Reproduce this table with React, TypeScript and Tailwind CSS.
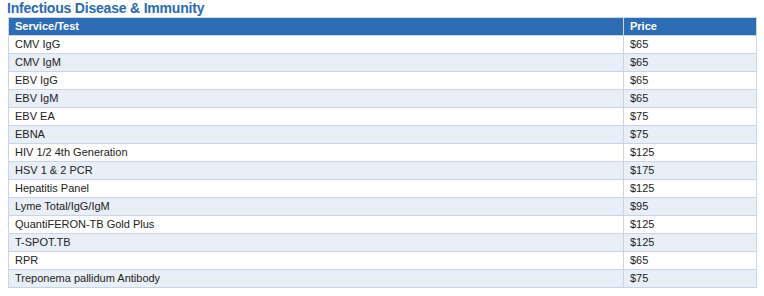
const rows: [string, string][] = [
  ["CMV IgG", "$65"],
  ["CMV IgM", "$65"],
  ["EBV IgG", "$65"],
  ["EBV IgM", "$65"],
  ["EBV EA", "$75"],
  ["EBNA", "$75"],
  ["HIV 1/2 4th Generation", "$125"],
  ["HSV 1 & 2 PCR", "$175"],
  ["Hepatitis Panel", "$125"],
  ["Lyme Total/IgG/IgM", "$95"],
  ["QuantiFERON-TB Gold Plus", "$125"],
  ["T-SPOT.TB", "$125"],
  ["RPR", "$65"],
  ["Treponema pallidum Antibody", "$75"],
];

export default function App() {
  return (
    <div className="w-[764px] h-[296px] bg-white px-2 font-['Liberation_Sans',Arial,sans-serif]">
      <h2 className="text-[14px] leading-[17px] font-bold tracking-[-0.2px] text-[#2a6ab0] -ml-px">
        Infectious Disease &amp; Immunity
      </h2>
      <table className="w-[749px] border-collapse text-[11px] text-[#222]">
        <thead>
          <tr className="bg-[#2e6db4] text-white h-[18px]">
            <th className="border border-[#c9d5e4] px-1.5 text-left font-bold">Service/Test</th>
            <th className="w-[133px] border border-[#c9d5e4] px-1.5 text-left font-bold">Price</th>
          </tr>
        </thead>
        <tbody>
          {rows.map(([name, price], i) => (
            <tr key={name} className={i % 2 === 0 ? "bg-white h-[18px]" : "bg-[#e9eff6] h-[18px]"}>
              <td className="border border-[#c9d5e4] px-1.5 leading-[17px]">{name}</td>
              <td className="border border-[#c9d5e4] px-1.5 leading-[17px]">{price}</td>
            </tr>
          ))}
        </tbody>
      </table>
    </div>
  );
}
